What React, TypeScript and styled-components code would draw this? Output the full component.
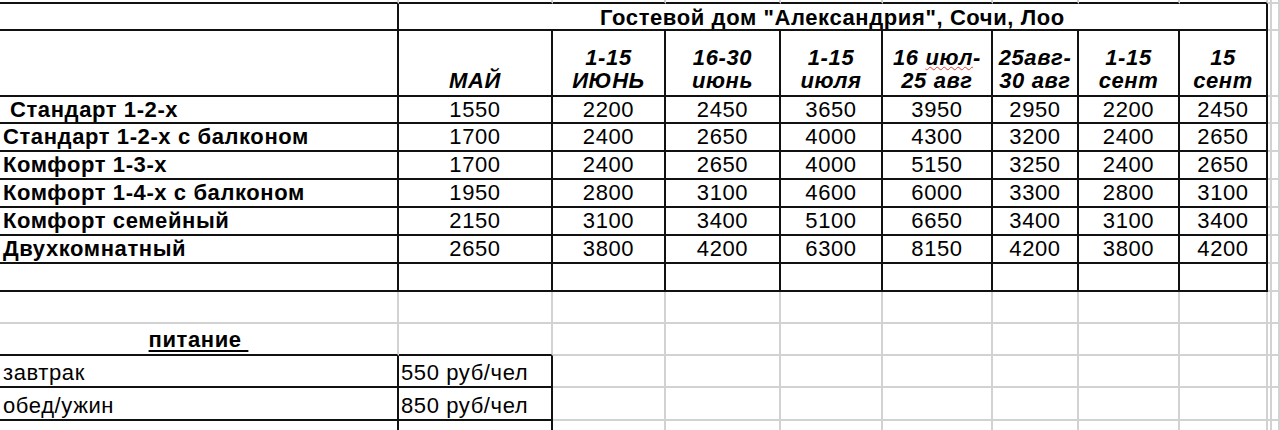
import React from "react";
import styled, { createGlobalStyle } from "styled-components";

type Line = "black" | "gray" | "none";

const GlobalStyle = createGlobalStyle`
  html, body {
    margin: 0;
    padding: 0;
    background: #fff;
  }
  body {
    font-family: "Liberation Sans", Arial, sans-serif;
    color: #000;
  }
`;

const COLS = [399, 154, 113, 115, 102, 110, 86, 101, 88, 4];

const Sheet = styled.div`
  width: 1280px;
  height: 430px;
  overflow: hidden;
  display: flex;
  flex-direction: column;
  background: #fff;
`;

const Row = styled.div<{ $h: number }>`
  display: grid;
  grid-template-columns: ${COLS.map((c) => `${c}px`).join(" ")} 1fr;
  height: ${(p) => p.$h}px;
  flex-shrink: 0;
`;

const lineColor = (l: Line) =>
  l === "black" ? "#111" : l === "gray" ? "#d2d2d2" : "transparent";

const Cell = styled.div<{
  $span?: number;
  $right?: Line;
  $bottom?: Line;
  $align?: "left" | "center";
  $valign?: "center" | "end" | "start";
  $bold?: boolean;
  $italic?: boolean;
  $pl?: number;
  $pb?: number;
  $pt?: number;
  $lh?: number;
  $color?: string;
}>`
  box-sizing: border-box;
  grid-column: span ${(p) => p.$span || 1};
  border-right: 2px solid ${(p) => lineColor(p.$right || "gray")};
  border-bottom: 2px solid ${(p) => lineColor(p.$bottom || "gray")};
  display: flex;
  flex-direction: column;
  justify-content: ${(p) =>
    p.$valign === "end" ? "flex-end" : p.$valign === "start" ? "flex-start" : "center"};
  align-items: ${(p) => (p.$align === "left" ? "flex-start" : "center")};
  text-align: ${(p) => p.$align || "center"};
  padding: ${(p) => p.$pt || 0}px 0 ${(p) => p.$pb || 0}px ${(p) => p.$pl || 0}px;
  font-size: 22px;
  letter-spacing: 0.6px;
  line-height: ${(p) => p.$lh || 24}px;
  font-weight: ${(p) => (p.$bold ? 700 : 400)};
  font-style: ${(p) => (p.$italic ? "italic" : "normal")};
  color: ${(p) => p.$color || "#000"};
  white-space: nowrap;
  overflow: hidden;
`;

const Typo = styled.span`
  text-decoration: underline wavy #e03c3c;
  text-decoration-thickness: 1px;
  text-underline-offset: 1px;
`;

const Underlined = styled.span`
  text-decoration: underline;
  text-decoration-thickness: 2px;
  text-underline-offset: 3px;
`;

const headers: [React.ReactNode, string][] = [
  ["", "МАЙ"],
  ["1-15", "ИЮНЬ"],
  ["16-30", "июнь"],
  ["1-15", "июля"],
  [<>16 <Typo>июл</Typo>-</>, "25 авг"],
  ["25авг-", "30 авг"],
  ["1-15", "сент"],
  ["15", "сент"],
];

const rooms: { name: string; pad: number; h: number; prices: number[] }[] = [
  { name: "Стандарт 1-2-х", pad: 10, h: 27, prices: [1550, 2200, 2450, 3650, 3950, 2950, 2200, 2450] },
  { name: "Стандарт 1-2-х с балконом", pad: 3, h: 28, prices: [1700, 2400, 2650, 4000, 4300, 3200, 2400, 2650] },
  { name: "Комфорт 1-3-х", pad: 3, h: 28, prices: [1700, 2400, 2650, 4000, 5150, 3250, 2400, 2650] },
  { name: "Комфорт 1-4-х с балконом", pad: 3, h: 28, prices: [1950, 2800, 3100, 4600, 6000, 3300, 2800, 3100] },
  { name: "Комфорт семейный", pad: 3, h: 28, prices: [2150, 3100, 3400, 5100, 6650, 3400, 3100, 3400] },
  { name: "Двухкомнатный", pad: 3, h: 28, prices: [2650, 3800, 4200, 6300, 8150, 4200, 3800, 4200] },
];

const meals = [
  { name: "завтрак", price: "550 руб/чел", h: 32 },
  { name: "обед/ужин", price: "850 руб/чел", h: 33 },
];

// gray filler cells to the right of the bordered table
const Tail = ({ bottom = "gray" as Line }) => (
  <>
    <Cell $bottom={bottom} />
    <Cell $bottom={bottom} />
  </>
);

const GrayCells = ({ n }: { n: number }) => (
  <>
    {Array.from({ length: n }).map((_, i) => (
      <Cell key={i} />
    ))}
  </>
);

export default function App() {
  return (
    <>
      <GlobalStyle />
      <Sheet>
        {/* strip of the row above the table */}
        <Row $h={4}>
          {Array.from({ length: 9 }).map((_, i) => (
            <Cell key={i} $bottom="black" />
          ))}
          <Tail />
        </Row>

        <Row $h={27}>
          <Cell $right="black" $bottom="black" />
          <Cell $span={8} $right="black" $bottom="black" $bold $pt={1} $lh={25}>
            Гостевой дом "Александрия", Сочи, Лоо
          </Cell>
          <Tail />
        </Row>

        <Row $h={66}>
          <Cell $right="black" $bottom="black" />
          {headers.map(([top, bottom], i) => (
            <Cell key={i} $right="black" $bottom="black" $bold $italic $valign="end" $pb={3} $lh={23}>
              {top && <div>{top}</div>}
              <div>{bottom}</div>
            </Cell>
          ))}
          <Tail />
        </Row>

        {rooms.map((r) => (
          <Row key={r.name} $h={r.h}>
            <Cell $right="black" $bottom="black" $align="left" $bold $pl={r.pad} $lh={r.h - 2}>
              {r.name}
            </Cell>
            {r.prices.map((p, i) => (
              <Cell key={i} $right="black" $bottom="black" $lh={r.h - 2}>
                {p}
              </Cell>
            ))}
            <Tail />
          </Row>
        ))}

        <Row $h={28}>
          {Array.from({ length: 9 }).map((_, i) => (
            <Cell key={i} $right="black" $bottom="black" />
          ))}
          <Tail />
        </Row>

        <Row $h={32}>
          <GrayCells n={11} />
        </Row>

        <Row $h={32}>
          <Cell $bottom="black" $bold $valign="end" $pb={2}>
            <Underlined>питание&nbsp;</Underlined>
          </Cell>
          <Cell $bottom="black" />
          <GrayCells n={9} />
        </Row>

        {meals.map((m) => (
          <Row key={m.name} $h={m.h}>
            <Cell $right="black" $bottom="black" $align="left" $valign="end" $pl={3} $pb={1}>
              {m.name}
            </Cell>
            <Cell $right="black" $bottom="black" $align="left" $valign="end" $pl={2} $pb={1}>
              {m.price}
            </Cell>
            <GrayCells n={9} />
          </Row>
        ))}

        <Row $h={32}>
          <Cell $right="black" $bottom="black" />
          <Cell $right="black" $bottom="black" $align="left" $valign="start" $pl={2} $pt={6} $color="#e4e4e4">
            1000 руб/чел
          </Cell>
          <GrayCells n={9} />
        </Row>
      </Sheet>
    </>
  );
}
